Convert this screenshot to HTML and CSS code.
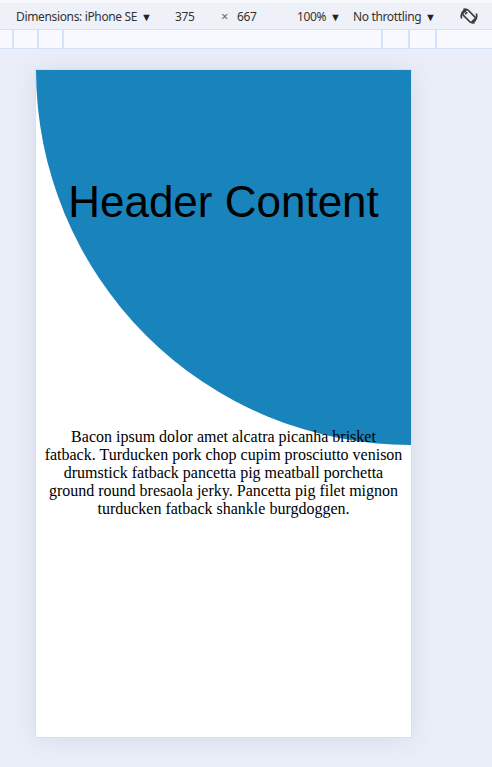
FILE: index.html
```html
<!DOCTYPE html>
<html lang="en">
<head>
    <meta charset="UTF-8">
    <meta name="viewport" content="width=device-width, initial-scale=1.0">
    <title>Curved Header</title>
    <link rel="stylesheet" href="styles.css">
</head>
<body>
    <div class="toolbar">
        <span class="dims">Dimensions: iPhone SE <span class="caret">&#9660;</span></span>
        <span class="size">375</span>
        <span class="times">&times;</span>
        <span class="size">667</span>
        <span class="zoom">100% <span class="caret">&#9660;</span></span>
        <span class="throttle">No throttling <span class="caret">&#9660;</span></span>
        <span class="rotate">
            <svg width="20" height="20" viewBox="0 0 20 20">
                <g transform="rotate(-45 10 10)" fill="none" stroke="#3c3c3c" stroke-width="1.7">
                    <rect x="6.5" y="3.8" width="7" height="12.4" rx="1.2"/>
                    <line x1="8.5" y1="6" x2="11.5" y2="6"/>
                </g>
                <path d="M2.6 12.6 A7.6 7.6 0 0 1 6.4 3.4" fill="none" stroke="#3c3c3c" stroke-width="1.7"/>
                <path d="M4.4 3 L6.8 3.2 L6.2 5.6" fill="none" stroke="#3c3c3c" stroke-width="1.5"/>
                <path d="M17.4 7.4 A7.6 7.6 0 0 1 13.6 16.6" fill="none" stroke="#3c3c3c" stroke-width="1.7"/>
                <path d="M15.6 17 L13.2 16.8 L13.8 14.4" fill="none" stroke="#3c3c3c" stroke-width="1.5"/>
            </svg>
        </span>
    </div>
    <div class="ruler">
        <div class="marks">
            <i></i><i></i><i></i>
        </div>
        <div class="marks right">
            <i></i><i></i><i></i>
        </div>
    </div>
    <div class="stage">
        <div class="device">
            <header class="curve">
                <h1>Header Content</h1>
            </header>
            <p class="copy">Bacon ipsum dolor amet alcatra picanha brisket fatback. Turducken pork chop cupim prosciutto venison drumstick fatback pancetta pig meatball porchetta ground round bresaola jerky. Pancetta pig filet mignon turducken fatback shankle burgdoggen.</p>
        </div>
    </div>
</body>
</html>
```

FILE: styles.css
```css
body {
    margin: 0;
    background-color: #eaeef8;
    font-family: 'Noto Sans', 'Open Sans', sans-serif;
    height: 767px;
    overflow: hidden;
}

.toolbar {
    height: 26px;
    border-top: 3px solid #f7f8fc;
    background-color: #eef1f8;
    border-bottom: 1px solid #d4e0f5;
    display: flex;
    align-items: center;
    font-size: 12px;
    letter-spacing: -0.35px;
    color: #333;
    padding-left: 16px;
}

.caret {
    font-size: 11px;
    margin-left: 1px;
    letter-spacing: 0;
    color: #222;
}

.dims {
    width: 159px;
}

.size {
    width: 40px;
}

.times {
    width: 22px;
    color: #666;
    font-size: 13px;
    padding-left: 6px;
    box-sizing: border-box;
}

.zoom {
    margin-left: 20px;
    width: 56px;
}

.throttle {
    width: 106px;
}

.rotate {
    display: flex;
}

.ruler {
    height: 18px;
    background-color: #f7f9fe;
    border-bottom: 1px solid #d6e2f6;
    display: flex;
    justify-content: space-between;
    padding: 0 55px 0 12px;
}

.marks {
    display: flex;
    gap: 23px;
}

.marks.right {
    gap: 25px;
}

.marks i {
    width: 2px;
    height: 18px;
    background-color: #d3e3fd;
}

.stage {
    padding: 21px 0 0 36px;
}

.device {
    width: 375px;
    height: 667px;
    background-color: #fff;
    outline: 1px solid #dcdfe6;
    box-shadow: 0 2px 24px rgba(60, 80, 130, 0.12);
    overflow: hidden;
}

.curve {
    height: 375px;
    background-color: #1983bc;
    border-bottom-left-radius: 100%;
    padding-top: 107px;
    box-sizing: border-box;
}

.curve h1 {
    margin: 0;
    font-family: 'Liberation Sans', Arial, sans-serif;
    font-size: 44px;
    font-weight: normal;
    text-align: center;
    color: #000;
}

.copy {
    margin: -17px 0 0;
    padding: 0 8px;
    font-family: 'Liberation Serif', 'Times New Roman', serif;
    font-size: 16px;
    line-height: 18px;
    text-align: center;
    color: #000;
}
```
